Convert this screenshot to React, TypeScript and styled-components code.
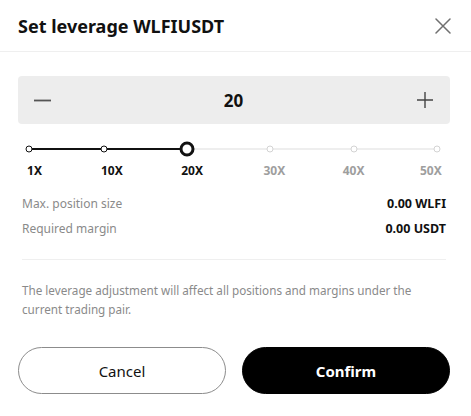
import { useState } from 'react'
import styled, { createGlobalStyle } from 'styled-components'

const GlobalStyle = createGlobalStyle`
  html, body {
    margin: 0;
    padding: 0;
    background: #ffffff;
  }
  body {
    font-family: 'Noto Sans', 'Liberation Sans', sans-serif;
    color: #111;
  }
  * {
    box-sizing: border-box;
  }
`

const Modal = styled.div`
  width: 471px;
  height: 416px;
  background: #fff;
  display: flex;
  flex-direction: column;
`

const Header = styled.div`
  height: 52px;
  display: flex;
  align-items: center;
  justify-content: space-between;
  padding: 0 20px 0 18px;
  border-bottom: 1px solid #efefef;
`

const Title = styled.h1`
  margin: 0;
  font-size: 18px;
  font-weight: 700;
  color: #111;
  letter-spacing: 0;
`

const CloseButton = styled.button`
  border: none;
  background: none;
  padding: 0;
  width: 17px;
  height: 17px;
  display: flex;
  align-items: center;
  justify-content: center;
  cursor: pointer;
`

const Body = styled.div`
  padding: 24px 21px 0 18px;
  display: flex;
  flex-direction: column;
`

const Stepper = styled.div`
  height: 48px;
  background: #ededed;
  border-radius: 4px;
  display: flex;
  align-items: center;
  justify-content: space-between;
  padding: 0 16px 0 15px;
`

const StepButton = styled.button`
  border: none;
  background: none;
  padding: 0;
  width: 18px;
  height: 18px;
  display: flex;
  align-items: center;
  justify-content: center;
  cursor: pointer;
`

const Value = styled.div`
  font-size: 17px;
  font-weight: 700;
  color: #111;
`

const Slider = styled.div`
  position: relative;
  height: 62px;
  margin: 0 13px 0 11px;
`

const Track = styled.div`
  position: absolute;
  left: 0;
  right: 0;
  top: 24px;
  height: 2px;
  background: #eeeeee;
`

const ActiveTrack = styled.div`
  position: absolute;
  left: 0;
  top: 24px;
  height: 2px;
  background: #111;
`

const Dot = styled.div<{ $active: boolean; $current: boolean }>`
  position: absolute;
  top: 25px;
  width: ${(p) => (p.$current ? 15 : 7)}px;
  height: ${(p) => (p.$current ? 15 : 7)}px;
  border-radius: 50%;
  background: #fff;
  border: ${(p) => (p.$current ? 3.5 : 1.8)}px solid
    ${(p) => (p.$active ? '#111' : '#d3d3d3')};
  transform: translate(-50%, -50%);
`

const MarkLabel = styled.div<{ $active: boolean }>`
  position: absolute;
  top: 39px;
  font-size: 12px;
  font-weight: 700;
  line-height: 16px;
  color: ${(p) => (p.$active ? '#111' : '#9e9e9e')};
  white-space: nowrap;
`

const InfoList = styled.div`
  display: flex;
  flex-direction: column;
  gap: 7px;
  padding: 8px 4px 0;
`

const InfoRow = styled.div`
  display: flex;
  justify-content: space-between;
  align-items: center;
  height: 18px;
`

const InfoLabel = styled.span`
  color: #8a8a8a;
  font-size: 12px;
`

const InfoValue = styled.span`
  color: #111;
  font-size: 12.5px;
  font-weight: 700;
`

const Divider = styled.div`
  height: 1px;
  background: #efefef;
  margin: 22px 4px 0;
`

const Note = styled.p`
  margin: 21px 4px 0;
  font-size: 11.7px;
  line-height: 19px;
  color: #8a8a8a;
`

const Actions = styled.div`
  display: flex;
  gap: 16px;
  padding: 0 21px 0 18px;
  margin-top: 28px;
`

const ActionButton = styled.button<{ $primary?: boolean }>`
  flex: 1;
  height: 47px;
  border-radius: 24px;
  font-family: inherit;
  font-size: 15px;
  font-weight: ${(p) => (p.$primary ? 700 : 400)};
  cursor: pointer;
  background: ${(p) => (p.$primary ? '#000' : '#fff')};
  color: ${(p) => (p.$primary ? '#fff' : '#111')};
  border: 1px solid ${(p) => (p.$primary ? '#000' : '#8c8c8c')};
`

const marks = [
  { value: 1, shift: -2 },
  { value: 10, shift: -3 },
  { value: 20, shift: -6 },
  { value: 30, shift: -7 },
  { value: 40, shift: -11 },
  { value: 50, shift: -17 },
]

const MIN = 1
const MAX = 50

const pct = (v: number) => ((v - MIN) / (MAX - MIN)) * 100

export default function App() {
  const [leverage, setLeverage] = useState(20)

  return (
    <>
      <GlobalStyle />
      <Modal>
        <Header>
          <Title>Set leverage WLFIUSDT</Title>
          <CloseButton aria-label="close">
            <svg width="16" height="16" viewBox="0 0 16 16">
              <path
                d="M1 1 L15 15 M15 1 L1 15"
                stroke="#707070"
                strokeWidth="1.5"
                strokeLinecap="round"
              />
            </svg>
          </CloseButton>
        </Header>
        <Body>
          <Stepper>
            <StepButton
              aria-label="decrease"
              onClick={() => setLeverage((v) => Math.max(MIN, v - 1))}
            >
              <svg width="17" height="17" viewBox="0 0 17 17">
                <path d="M0 8.5 H17" stroke="#555" strokeWidth="1.8" />
              </svg>
            </StepButton>
            <Value>{leverage}</Value>
            <StepButton
              aria-label="increase"
              onClick={() => setLeverage((v) => Math.min(MAX, v + 1))}
            >
              <svg width="16" height="16" viewBox="0 0 16 16">
                <path d="M0 8 H16 M8 0 V16" stroke="#444" strokeWidth="1.4" />
              </svg>
            </StepButton>
          </Stepper>

          <Slider>
            <Track />
            <ActiveTrack style={{ width: `${pct(leverage)}%` }} />
            {marks.map((m) => (
              <Dot
                key={m.value}
                $active={m.value <= leverage}
                $current={m.value === leverage}
                style={{ left: `${pct(m.value)}%` }}
              />
            ))}
            {marks.map((m) => (
              <MarkLabel
                key={m.value}
                $active={m.value <= leverage}
                style={{ left: `calc(${pct(m.value)}% + ${m.shift}px)` }}
              >
                {m.value}X
              </MarkLabel>
            ))}
          </Slider>

          <InfoList>
            <InfoRow>
              <InfoLabel>Max. position size</InfoLabel>
              <InfoValue>0.00 WLFI</InfoValue>
            </InfoRow>
            <InfoRow>
              <InfoLabel>Required margin</InfoLabel>
              <InfoValue>0.00 USDT</InfoValue>
            </InfoRow>
          </InfoList>

          <Divider />

          <Note>
            The leverage adjustment will affect all positions and margins under
            the current trading pair.
          </Note>
        </Body>
        <Actions>
          <ActionButton>Cancel</ActionButton>
          <ActionButton $primary>Confirm</ActionButton>
        </Actions>
      </Modal>
    </>
  )
}
